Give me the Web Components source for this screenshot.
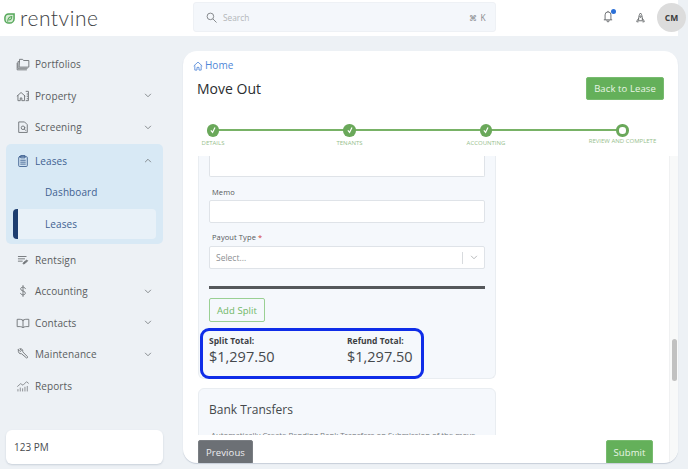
<!DOCTYPE html>
<html lang="en">
<head>
<meta charset="utf-8">
<title>Move Out</title>
<style>
  html, body {
    margin: 0;
    height: 100%;
    overflow: hidden;
  }
  body {
    background: #edf1f5;
    font-family: "Open Sans", "Liberation Sans", sans-serif;
    color: #4a4d50;
  }
</style>
</head>
<body>
<rv-app>
  <rv-header slot="header"></rv-header>
  <rv-sidebar slot="sidebar">
    <rv-nav-item icon="folder" label="Portfolios"></rv-nav-item>
    <rv-nav-item icon="home" label="Property" expandable></rv-nav-item>
    <rv-nav-item icon="screen" label="Screening" expandable></rv-nav-item>
    <rv-nav-group>
      <rv-nav-item icon="clipboard" label="Leases" expandable open active></rv-nav-item>
      <rv-sub-item label="Dashboard"></rv-sub-item>
      <rv-sub-item label="Leases" current></rv-sub-item>
    </rv-nav-group>
    <rv-nav-item icon="sign" label="Rentsign"></rv-nav-item>
    <rv-nav-item icon="dollar" label="Accounting" expandable></rv-nav-item>
    <rv-nav-item icon="book" label="Contacts" expandable></rv-nav-item>
    <rv-nav-item icon="wrench" label="Maintenance" expandable></rv-nav-item>
    <rv-nav-item icon="chart" label="Reports"></rv-nav-item>
  </rv-sidebar>
  <rv-move-out slot="main"></rv-move-out>
</rv-app>

<script>
const ICONS = {
  folder: `<path d="M4.500 4.500V3h4l1.200 1.500h6.800v8.500h-12z"/><path d="M4.500 6H2.500v8.500h12"/><path d="M1.500 8v8.500h12"/>`,
  home: `<path d="M1.500 9 6.500 4.500l5 4.500"/><path d="M2.500 8.500V15h3v-3.500h2V15h3.500V8.500"/><path d="M13 3h3v12h-3M14.500 6v.8M14.500 9v.8M14.500 12v.8"/>`,
  screen: `<path d="M4 2.500h7l3.500 3.500v10H4z"/><circle cx="9" cy="10" r="2.300"/><path d="m10.800 11.800 1.700 1.700"/>`,
  clipboard: `<rect x="3.500" y="3.500" width="11" height="12.500" rx="1"/><path d="M6.500 2h5v3h-5zM6 8h6M6 10.500h6M6 13h6"/>`,
  sign: `<path d="M3 4.500h10M3 7.500h8M3 10.500h5"/><path d="m10 12 4-3 1 1-3.500 3.500-2 .5z" fill="currentColor"/>`,
  dollar: `<path d="M12 6c-.4-1.300-1.500-2-3-2-1.800 0-3 1-3 2.300C6 9.800 12 8.200 12 11.700 12 13 10.800 14 9 14c-1.600 0-2.700-.7-3.100-2M9 2v14"/>`,
  book: `<path d="M9 5.500C7.500 4.300 5 4 1.500 4.300v9.400c3.500-.3 6 0 7.500 1.200 1.500-1.200 4-1.500 7.500-1.200V4.300C13 4 10.500 4.300 9 5.500zM9 5.500v9.400"/>`,
  wrench: `<path d="M3 3.500 5.300 5.800 7 4.500 4.800 2.300c2-.6 4 .8 4 2.900l-.2 1 6.200 6.200c.8.800-.7 2.300-1.500 1.500L7 8.600c-2.500.7-4.800-1.600-4-5.100z"/>`,
  chart: `<path d="M2 9.500 6 6l3 2 4.500-4.500 2.500 2M2.500 15.500v-2M5.500 15.500v-4M8.500 15.500v-3M11.500 15.500v-5M14.500 15.500v-6" stroke-width="1"/>`
};

function iconSvg(name) {
  return `<svg width="14" height="14" viewBox="0 0 18 18" fill="none" stroke="currentColor" stroke-width="1.200" stroke-linecap="round" stroke-linejoin="round">${ICONS[name]}</svg>`;
}

const chevron = (up) =>
  `<svg width="8" height="5" viewBox="0 0 9 6" fill="none" stroke="currentColor" stroke-width="1"><path d="${up ? "M1 5l3.500-3.500L8 5" : "M1 1l3.500 3.500L8 1"}"/></svg>`;

class RvApp extends HTMLElement {
  constructor() {
    super();
    this.attachShadow({ mode: "open" }).innerHTML = `
      <style>
        :host {
          display: grid;
          grid-template-columns: 183px 495px;
          grid-template-rows: 36px 433px;
          width: 688px;
          height: 469px;
        }
        ::slotted([slot="header"]) { grid-column: 1 / -1; }
      </style>
      <slot name="header"></slot>
      <slot name="sidebar"></slot>
      <slot name="main"></slot>
    `;
  }
}

class RvHeader extends HTMLElement {
  constructor() {
    super();
    this.attachShadow({ mode: "open" }).innerHTML = `
      <style>
        :host {
          display: flex;
          align-items: center;
          background: #fff;
          height: 36px;
        }
        .logo {
          flex: none;
          display: flex;
          align-items: center;
          gap: 5px;
          width: 193px;
          height: 32px;
          margin-top: -2px;
          padding-left: 4px;
          box-sizing: border-box;
          font-family: Lato, sans-serif;
          font-weight: 300;
          font-size: 21px;
          letter-spacing: .55px;
          color: #3d4143;
        }
        .logo svg { margin-top: 2px; }
        .search {
          flex: none;
          box-sizing: border-box;
          width: 303px;
          height: 30px;
          margin-top: -2px;
          background: #f4f7fb;
          border: 1px solid #eef1f5;
          border-radius: 3px;
          display: flex;
          align-items: center;
          padding: 0 9px 0 12px;
          gap: 6px;
          color: #b3b6b9;
          font-size: 8.300px;
        }
        .search svg { color: #7d8083; }
        .search span { flex: 1; }
        .search kbd { font: inherit; color: #85888b; letter-spacing: .5px; }
        .tools {
          display: flex;
          align-items: center;
          margin-left: 106px;
          color: #55585b;
        }
        .bell { position: relative; display: flex; width: 32px; margin-top: -3px; }
        .bell svg { margin-left: 1px; }
        .bell i {
          position: absolute;
          left: 9px;
          top: -1px;
          width: 5px;
          height: 5px;
          border-radius: 50%;
          background: #2b6fd6;
        }
        .rocket { display: flex; width: 23px; margin-top: -2px; }
        .rocket svg { margin-left: 2px; }
        .avatar {
          width: 29px;
          height: 29px;
          margin-top: -2px;
          border-radius: 50%;
          background: #dcdcdc;
          color: #3c3c3c;
          font-size: 8.500px;
          font-weight: 700;
          display: flex;
          align-items: center;
          justify-content: center;
        }
      </style>
      <div class="logo">
        <svg width="11" height="11" viewBox="0 0 12 12">
          <path d="M5 1h6v5.200A4.800 4.800 0 0 1 6.200 11H5A4 4 0 0 1 1 7V5a4 4 0 0 1 4-4z" fill="#d7ecd4" stroke="#54a759" stroke-width="1.600"/>
          <path d="M4 9.500C4 6.500 5.200 4.300 8.500 3.800 8.500 6.300 7.200 7.600 5.200 7.600" fill="none" stroke="#54a759" stroke-width="1.100"/>
        </svg>
        <span>rentvine</span>
      </div>
      <div class="search">
        <svg width="11" height="11" viewBox="0 0 12 12" fill="none" stroke="currentColor" stroke-width="1"><circle cx="4.800" cy="4.800" r="3.600"/><path d="m7.500 7.500 4 4"/></svg>
        <span>Search</span>
        <kbd>⌘ K</kbd>
      </div>
      <div class="tools">
        <div class="bell">
          <svg width="10" height="13" viewBox="0 0 12 15" fill="none" stroke="currentColor" stroke-width="1"><path d="M1 11.500h10M2.500 11.500V5.500a3.500 3.500 0 0 1 7 0v6M6 2V.8M4.800 11.800v1a1.200 1.200 0 0 0 2.400 0v-1"/></svg>
          <i></i>
        </div>
        <div class="rocket">
          <svg width="9" height="11" viewBox="0 0 11 13" fill="none" stroke="currentColor" stroke-width="1"><path d="M5.500 1C3.800 3 3.200 5 3.200 10.500h4.600C7.800 5 7.200 3 5.500 1zM3.200 7.500 1 10.800v1h2.200M7.800 7.500l2.200 3.300v1H7.800"/><circle cx="5.500" cy="5.500" r=".9"/></svg>
        </div>
        <div class="avatar">CM</div>
      </div>
    `;
  }
}

class RvSidebar extends HTMLElement {
  constructor() {
    super();
    this.attachShadow({ mode: "open" }).innerHTML = `
      <style>
        :host {
          display: flex;
          flex-direction: column;
          height: 433px;
          box-sizing: border-box;
          padding: 12.250px 20px 0 6px;
        }
        .spacer { flex: 1; }
        .user {
          box-sizing: border-box;
          height: 34px;
          margin-bottom: 5px;
          width: 157px;
          background: #fff;
          border-radius: 6px;
          box-shadow: 0 1px 2px rgba(60, 80, 110, .2);
          padding-left: 8px;
          display: flex;
          align-items: center;
          font-size: 10px;
          color: #4a4d50;
        }
      </style>
      <slot></slot>
      <div class="spacer"></div>
      <div class="user">123 PM</div>
    `;
  }
}

class RvNavItem extends HTMLElement {
  connectedCallback() {
    if (this.shadowRoot) return;
    const expandable = this.hasAttribute("expandable");
    this.attachShadow({ mode: "open" }).innerHTML = `
      <style>
        :host {
          display: flex;
          align-items: center;
          height: 31.500px;
          color: #5a5d60;
          font-size: 10px;
          letter-spacing: .1px;
        }
        :host([active]) { color: #3f6191; }
        .icon {
          display: flex;
          width: 14px;
          margin-left: 10px;
          margin-right: 5px;
          color: #72767a;
        }
        :host([active]) .icon { color: #3f6191; }
        .label { flex: 1; }
        .chev { display: flex; margin-right: 11px; color: #74787c; }
      </style>
      <span class="icon">${iconSvg(this.getAttribute("icon"))}</span>
      <span class="label">${this.getAttribute("label")}</span>
      ${expandable ? `<span class="chev">${chevron(this.hasAttribute("open"))}</span>` : ""}
    `;
  }
}

class RvNavGroup extends HTMLElement {
  constructor() {
    super();
    this.attachShadow({ mode: "open" }).innerHTML = `
      <style>
        :host {
          display: block;
          height: 100px;
          margin: 1.250px 0 0;
          padding-top: 1px;
          box-sizing: border-box;
          background: #d8e9f5;
          border-radius: 5px;
        }
      </style>
      <slot></slot>
    `;
  }
}

class RvSubItem extends HTMLElement {
  connectedCallback() {
    if (this.shadowRoot) return;
    this.attachShadow({ mode: "open" }).innerHTML = `
      <style>
        :host {
          display: flex;
          align-items: center;
          box-sizing: border-box;
          height: 31.500px;
          padding-left: 39px;
          color: #3f6191;
          font-size: 10px;
          letter-spacing: .1px;
        }
        :host([current]) {
          height: 30px;
          margin: 1px 7px 0 7px;
          padding-left: 27px;
          background: #e8f1f8;
          border-radius: 4px;
          border-left: 5px solid #1d3e70;
        }
      </style>
      ${this.getAttribute("label")}
    `;
  }
}

class RvStepper extends HTMLElement {
  constructor() {
    super();
    const check = `<svg width="12" height="12" viewBox="0 0 14 14" fill="none" stroke="#fff" stroke-width="1.400"><path d="m4.500 7.500 2 2.300L9.300 4"/></svg>`;
    const steps = [["Details", 1], ["Tenants", 1], ["Accounting", 1], ["Review and Complete", 0]];
    this.attachShadow({ mode: "open" }).innerHTML = `
      <style>
        :host {
          display: grid;
          grid-template-columns: repeat(3, 136.500px) 80px;
          margin: 0 0 0 -20px;
          position: relative;
        }
        .step {
          width: 80px;
          display: flex;
          flex-direction: column;
          align-items: center;
        }
        .dot {
          width: 12.500px;
          height: 12.500px;
          border-radius: 50%;
          background: #6aa85a;
          display: flex;
          align-items: center;
          justify-content: center;
          position: relative;
          z-index: 1;
        }
        .dot.now { background: #fff; box-sizing: border-box; border: 3.500px solid #6aa85a; }
        .label {
          margin-top: 2.500px;
          font-size: 6px;
          line-height: 9px;
          color: #97c08d;
          white-space: nowrap;
          text-transform: uppercase;
        }
        .step.last .label { margin-top: .5px; }
        .line {
          position: absolute;
          left: 40px;
          right: 40px;
          top: 5.250px;
          height: 2px;
          background: #78b266;
        }
      </style>
      <div class="line"></div>
      ${steps.map(([name, done], i) => `
        <div class="step ${i === 3 ? "last" : ""}">
          <div class="dot ${done ? "" : "now"}">${done ? check : ""}</div>
          <div class="label">${name}</div>
        </div>`).join("")}
    `;
  }
}

class RvButton extends HTMLElement {
  constructor() {
    super();
    this.attachShadow({ mode: "open" }).innerHTML = `
      <style>
        :host {
          display: inline-flex;
          align-items: center;
          justify-content: center;
          box-sizing: border-box;
          height: 24px;
          border-radius: 2px;
          font-size: 9.500px;
          letter-spacing: .1px;
          white-space: nowrap;
          background: #64b05a;
          color: #e9f5e6;
          border: 1px solid #78bb6f;
        }
        :host([variant="outline"]) {
          background: transparent;
          color: #6fb766;
          border-color: #9ad093;
        }
        :host([variant="dark"]) {
          background: #6c7075;
          color: #eceef0;
          border-color: #7a7e83;
        }
      </style>
      <slot></slot>
    `;
  }
}

class RvField extends HTMLElement {
  connectedCallback() {
    if (this.shadowRoot) return;
    const label = this.getAttribute("label");
    const required = this.hasAttribute("required");
    const placeholder = this.getAttribute("placeholder");
    this.attachShadow({ mode: "open" }).innerHTML = `
      <style>
        :host {
          display: block;
          margin-bottom: 7px;
        }
        label {
          display: block;
          font-size: 7.500px;
          line-height: 14px;
          padding-left: 3px;
          margin-bottom: 1px;
          color: #55585b;
          letter-spacing: .1px;
        }
        :host([required]) label { margin-bottom: 2px; }
        label b { color: #d23a3a; font-weight: 400; }
        .box {
          box-sizing: border-box;
          height: 23px;
          background: #fff;
          border: 1px solid #dfe3e8;
          border-radius: 2px;
          display: flex;
          align-items: center;
          padding-left: 6px;
          color: #8d9093;
          font-size: 8.500px;
        }
        .box span { flex: 1; }
        .sep { width: 1px; height: 12px; background: #d8dbde; }
        .arrow { display: flex; width: 21px; justify-content: center; color: #a9acaf; }
      </style>
      <label>${label}${required ? ' <b>*</b>' : ""}</label>
      <div class="box">
        ${placeholder ? `<span>${placeholder}</span><i class="sep"></i><i class="arrow">${chevron(false)}</i>` : ""}
      </div>
    `;
  }
}

class RvPanel extends HTMLElement {
  constructor() {
    super();
    this.attachShadow({ mode: "open" }).innerHTML = `
      <style>
        :host {
          display: block;
          box-sizing: border-box;
          width: 298px;
          padding: 0 10px;
          background: #f5f8fc;
          border: 1px solid #e9edf1;
          border-radius: 6px;
          position: relative;
        }
      </style>
      <slot></slot>
    `;
  }
}

class RvTotal extends HTMLElement {
  connectedCallback() {
    if (this.shadowRoot) return;
    this.attachShadow({ mode: "open" }).innerHTML = `
      <style>
        :host { display: block; flex: none; width: 138px; }
        .k { font-size: 8.500px; font-weight: 700; line-height: 12px; color: #3c4043; }
        .v { font-size: 14.500px; line-height: 20px; color: #45494c; }
      </style>
      <div class="k">${this.getAttribute("label")}</div>
      <div class="v">${this.getAttribute("value")}</div>
    `;
  }
}

class RvHighlight extends HTMLElement {
  constructor() {
    super();
    this.attachShadow({ mode: "open" }).innerHTML = `
      <style>
        :host {
          display: block;
          position: absolute;
          left: 1px;
          top: 173px;
          width: 224px;
          height: 51px;
          box-sizing: border-box;
          border: 3px solid #0f2de8;
          border-radius: 9px;
          padding: 4px 6px;
        }
        .row { display: flex; }
      </style>
      <div class="row"><slot></slot></div>
    `;
  }
}

class RvMoveOut extends HTMLElement {
  constructor() {
    super();
    this.attachShadow({ mode: "open" }).innerHTML = `
      <style>
        :host {
          display: flex;
          flex-direction: column;
          width: 495px;
          height: 412px;
          margin-top: 15px;
          background: #fff;
          border-radius: 14px;
          box-shadow: 0 1px 1px rgba(80, 100, 130, .25);
          overflow: hidden;
        }
        .top { height: 105px; flex: none; box-sizing: border-box; padding: 8px 14px 0 10px; }
        .crumb {
          display: flex;
          align-items: center;
          gap: 2px;
          color: #4f86d8;
          font-size: 10px;
          line-height: 13px;
        }
        .title-row {
          display: flex;
          justify-content: space-between;
          align-items: center;
          margin: 5px 0 24px 4px;
        }
        .title-row rv-button { width: 78px; height: 23px; }
        h1 {
          margin: 0;
          font-size: 14px;
          font-weight: 400;
          color: #2a2d30;
        }
        .bottom { flex: 1; display: flex; min-height: 0; }
        .content { flex: 1; display: flex; flex-direction: column; min-width: 0; }
        .scroller {
          height: 279px;
          flex: none;
          overflow: hidden;
          padding-left: 15px;
        }
        .form { margin-top: -1px; }
        .panel1 { height: 224px; border-top: 0; border-radius: 0 0 6px 6px; }
        .first { height: 22px; box-sizing: border-box; background: #fff; border: 1px solid #dfe3e8; border-top: 0; border-radius: 0 0 2px 2px; margin-bottom: 8px; }
        .rule { height: 3px; background: #55585b; margin: 17px 0 9px; }
        .add { display: flex; width: 56px; }
        .panel2 { margin-top: 9px; height: 70px; }
        h2 { margin: 0; padding-top: 12px; font-size: 12px; font-weight: 400; color: #44484b; line-height: 18px; }
        .desc { margin: 10px 0 0; padding-left: 2px; font-size: 7.800px; line-height: 12px; color: #777b7e; white-space: nowrap; }
        .footer {
          flex: 1;
          display: flex;
          justify-content: space-between;
          align-items: flex-start;
          padding: 5px 16px 0 15px;
        }
        .prev { width: 55px; }
        .submit { width: 47px; }
        .track {
          width: 9px;
          flex: none;
          background: #f8f9f9;
          border-left: 1px solid #f0f1f2;
          box-sizing: border-box;
          padding-top: 183px;
        }
        .thumb { width: 5px; height: 42px; margin-left: 2px; border-radius: 3px; background: #c1c1c1; }
      </style>
      <div class="top">
        <div class="crumb">
          <svg width="10" height="10" viewBox="0 0 11 11" fill="none" stroke="currentColor" stroke-width=".9"><path d="M.8 5.500 5.500 1.200l4.700 4.300M2 4.800V10h2.400V7h2.200v3H9V4.800"/></svg>
          Home
        </div>
        <div class="title-row">
          <h1>Move Out</h1>
          <rv-button>Back to Lease</rv-button>
        </div>
        <rv-stepper></rv-stepper>
      </div>
      <div class="bottom">
        <div class="content">
          <div class="scroller">
            <div class="form">
              <rv-panel class="panel1">
                <div class="first"></div>
                <rv-field label="Memo"></rv-field>
                <rv-field label="Payout Type" required placeholder="Select..."></rv-field>
                <div class="rule"></div>
                <rv-button class="add" variant="outline">Add Split</rv-button>
                <rv-highlight>
                  <rv-total label="Split Total:" value="$1,297.50"></rv-total>
                  <rv-total label="Refund Total:" value="$1,297.50"></rv-total>
                </rv-highlight>
              </rv-panel>
              <rv-panel class="panel2">
                <h2>Bank Transfers</h2>
                <p class="desc">Automatically Create Pending Bank Transfers on Submission of the move</p>
              </rv-panel>
            </div>
          </div>
          <div class="footer">
            <rv-button class="prev" variant="dark">Previous</rv-button>
            <rv-button class="submit">Submit</rv-button>
          </div>
        </div>
        <div class="track"><div class="thumb"></div></div>
      </div>
    `;
  }
}

customElements.define("rv-app", RvApp);
customElements.define("rv-header", RvHeader);
customElements.define("rv-sidebar", RvSidebar);
customElements.define("rv-nav-item", RvNavItem);
customElements.define("rv-nav-group", RvNavGroup);
customElements.define("rv-sub-item", RvSubItem);
customElements.define("rv-stepper", RvStepper);
customElements.define("rv-button", RvButton);
customElements.define("rv-field", RvField);
customElements.define("rv-panel", RvPanel);
customElements.define("rv-total", RvTotal);
customElements.define("rv-highlight", RvHighlight);
customElements.define("rv-move-out", RvMoveOut);
</script>
</body>
</html>
